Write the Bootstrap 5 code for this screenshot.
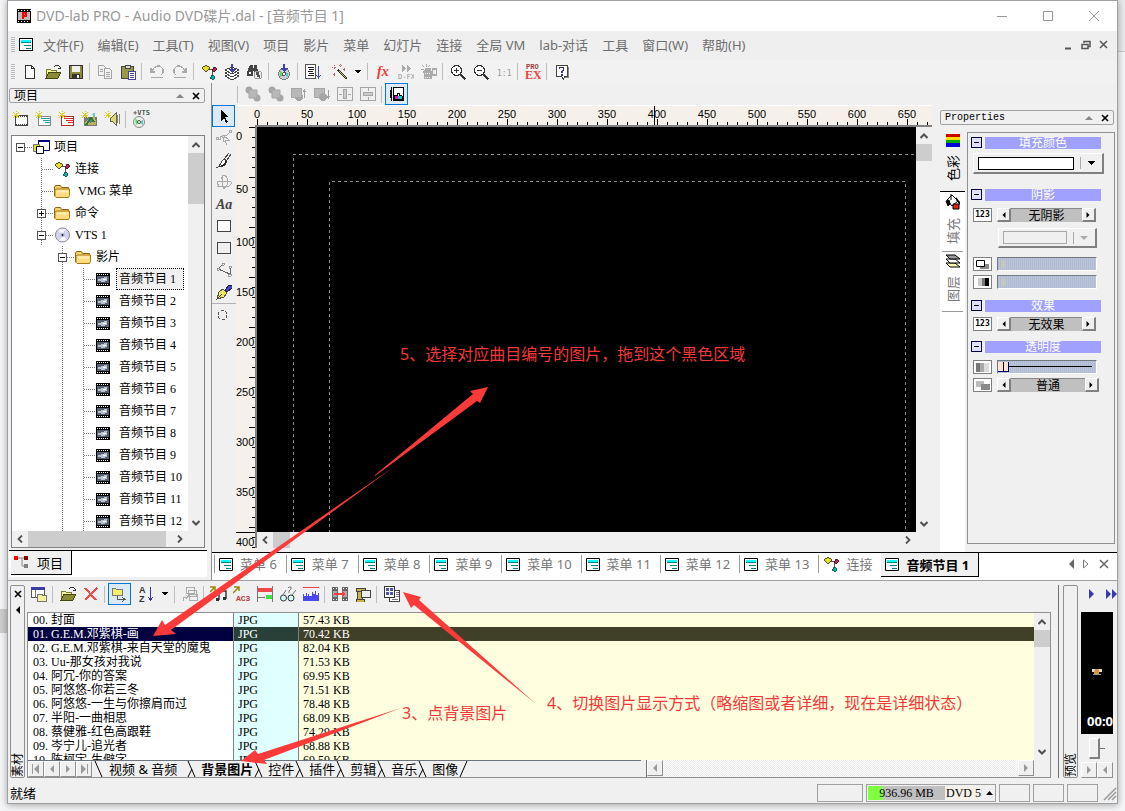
<!DOCTYPE html>
<html lang="zh-CN">
<head>
<meta charset="utf-8">
<meta name="viewport" content="width=device-width, initial-scale=1">
<title>DVD-lab PRO</title>
<link rel="stylesheet" href="https://cdn.jsdelivr.net/npm/bootstrap@5.3.0/dist/css/bootstrap.min.css">
<style>
:root{--face:#f0f0f0;--edge:#a0a0a0;--ui:"Noto Sans","Noto Sans CJK SC",sans-serif;--sim:"Liberation Serif","Noto Sans CJK SC",serif}
body{background:linear-gradient(#cdcdcd,#cdcdcd) 0 609px/8px 24px no-repeat,linear-gradient(#c8cacc,#c8cacc) 100% 51px/8px 1px no-repeat,linear-gradient(#e9eaec,#e9eaec) 100% 0/8px 51px no-repeat,#f5f6f7;font:13px/14px var(--ui);color:#000;height:100vh;overflow:hidden;padding:0 7px 7px 7px;position:relative}
button,input{font:inherit;color:inherit;padding:0;border:0;background:none}
a{color:inherit;text-decoration:none}
svg{display:block;flex:none}
.i{width:16px;height:16px;shape-rendering:crispEdges}
.app{background:var(--face);border:1px solid var(--edge);box-shadow:0 1px 7px rgba(0,0,0,.35);height:100%}
.titlebar{height:30px;background:#fff;color:#999;font-size:14px;flex:none}
.titlebar .ctl{width:46px}
.menubar{height:29px;color:#6d6d6d;background:#efefef;flex:none;padding:0 4px 2px 3px}
.grip{width:4px;height:16px;background:repeating-linear-gradient(#b8b8b8 0 1px,transparent 1px 2px)}
.bar23{height:23px;background:#f2f2f2;flex:none}
.tb{width:23px;height:22px;display:flex;align-items:center;justify-content:center;flex:none}
.tb.active{background:#dceaf6;border:1px solid #0078d7}
.dd{width:14px;height:22px;display:flex;align-items:center;justify-content:center;flex:none}
.sep{width:6px;height:17px;flex:none;background:linear-gradient(90deg,transparent 2px,#bdbdbd 2px 3px,transparent 3px)}
.cap{height:15px;border:1px solid var(--edge);border-radius:2px;font:12px/12px var(--sim);flex:none}
.leftdock{width:203px;flex:none}
.leftdock .cap{margin:5px 6px 0 1px}
.treebox{border:1px solid #808080;margin:0 6px 2px 3px}
.tree{font:12px/22px var(--sim);background:#fff}
.trow{height:22px;white-space:nowrap}
.g{width:21px;height:22px;flex:none;background-repeat:no-repeat}
.gv{background-image:repeating-linear-gradient(#777 0 1px,transparent 1px 2px);background-size:1px 22px;background-position:8px 0}
.gt{background-image:repeating-linear-gradient(#777 0 1px,transparent 1px 2px),repeating-linear-gradient(90deg,#777 0 1px,transparent 1px 2px);background-size:1px 22px,12px 1px;background-position:8px 0,9px 11px}
.gh{background-image:repeating-linear-gradient(90deg,#777 0 1px,transparent 1px 2px);background-size:12px 1px;background-position:9px 11px}
.box9{width:9px;height:9px;border:1px solid #555;background:linear-gradient(#000,#000) center/5px 1px no-repeat,#fff;margin:7px 0 0 4px;display:block}
.box9.plus{background:linear-gradient(#000,#000) center/5px 1px no-repeat,linear-gradient(#000,#000) center/1px 5px no-repeat,#fff}
.tico{width:21px;flex:none}
.tname{margin-left:2px}
.focus1{outline:1px dotted #000;outline-offset:-1px;background:#f0f0f0;padding-left:3px;margin-left:-1px;height:22px;width:68px}
.sbv{width:16px;flex:none;background:var(--face)}
.sbh{height:16px;flex:none;background:var(--face)}
.sbv button,.sbh button{width:16px;height:17px;display:flex;align-items:center;justify-content:center}
.sbh button{height:16px}
.thumb{background:#cdcdcd}
.ltabs{height:27px;background:#fff;border-top:1px solid #000;margin:0 4px 3px 1px;flex:none}
.ltab{background:var(--face);border:solid #000;border-width:0 1px 1px 0;height:24px;padding:0 8px 0 3px;margin-left:2px;gap:7px}
.rightcol{border-left:1px solid #909090;min-width:0}
.palette{width:24px;flex:none}
.hruler{height:20px;flex:none;background:#f5f1ea;font:11px/12px "Liberation Sans",sans-serif;overflow:hidden;border-top:1px solid #fff;position:relative;
background-image:repeating-linear-gradient(90deg,#000 0 1px,transparent 1px 50px),repeating-linear-gradient(90deg,#000 0 1px,transparent 1px 10px);background-size:100% 6px,100% 3px;background-position:21px 100%;background-repeat:no-repeat}
.hruler span{width:50px;flex:none;text-align:center;padding-top:2px}
.hruler span:first-child{width:46px;padding-right:4px}
.hmark{position:absolute;left:418px;top:0;width:1px;height:19px;background:#000}
.vruler{width:19px;flex:none;background:#f5f1ea;font:11px/22px "Liberation Sans",sans-serif;overflow:hidden;position:relative;
background-image:repeating-linear-gradient(#000 0 1px,transparent 1px 50px),repeating-linear-gradient(#000 0 1px,transparent 1px 10px);background-size:6px 100%,3px 100%;background-position:100% 2px;background-repeat:no-repeat}
.vruler span{display:block;height:50px}
.vruler span.wide{height:53px}
.vmark{position:absolute;left:0;right:0;bottom:19px;height:1px;background:#000}
.frame{border:solid #808080;border-width:2px 0 0 2px;min-width:0}
.stage{background:#000;min-width:0}
.dock{width:185px;flex:none}
.dock .cap{margin:5px 3px 0 0}
.side{width:25px;background:#fff;flex:none;color:#777}
.side a{display:flex;flex-direction:column;align-items:center;gap:8px;height:60px;border-bottom:1px solid #999;padding-top:2px;margin:0 2px}
.side a.on{background:var(--face);border-bottom:1px solid #000;color:#000;height:63px;margin:0;padding-top:5px}
.rot{writing-mode:vertical-rl;text-orientation:sideways;transform:rotate(180deg)}
.props{border:1px solid #909090;margin:3px 2px 8px 2px;padding:4px 13px 0 3px;font:12px/14px var(--sim);min-width:0}
.sec{gap:3px;height:12px}
.sec .bx{width:11px;height:11px;border:1px solid #000040;background:linear-gradient(#000,#000) center/5px 1px no-repeat,#e0e0ff}
.sec h6{background:#a0a0ff;color:#fff;font:12px/12px var(--sim);margin:0;text-align:center;flex:1;overflow:hidden}
.raised{border:solid;border-width:1px 2px 2px 1px;border-color:#fff #808080 #808080 #fff;background:var(--face)}
.tag{width:19px;height:14px;border:1px solid #808080;background:#fff;font:bold 8px/12px "DejaVu Sans Mono",monospace;display:flex;align-items:center;justify-content:center;flex:none;margin-left:2px}
.prow{gap:5px;height:14px}
.spin{width:99px;height:14px;background:#c0c0c0;display:flex;justify-content:space-between;line-height:14px;border-top:1px solid #888;flex:none}
.spin button{width:14px;height:14px;display:flex;align-items:center;justify-content:center;margin-top:-1px}
.swatch{height:13px;border:1px solid #000;background:#fff;flex:1}
input[type=range]{appearance:none;width:100px;flex:none;height:14px;background:repeating-linear-gradient(90deg,#b0bbd3 0 1px,#bac5da 1px 2px);border:1px solid #808890;border-color:#707880 #fff #fff #707880;margin:0}
input[type=range]::-webkit-slider-thumb{appearance:none;width:4px;height:8px;background:#c6c6bc;border:0;border-radius:0;margin-left:3px}
input.full{background:linear-gradient(#000,#000) 8px 5px/86px 1px no-repeat,repeating-linear-gradient(90deg,#b0bbd3 0 1px,#bac5da 1px 2px)}
input.full::-webkit-slider-thumb{width:11px;height:10px;margin:0;background:linear-gradient(#000,#000) 5px 0/1px 9px no-repeat,#ffe4d4;border:solid #000060;border-width:0 1px 1px 0}
.mdi{height:28px;background:#fff;border-top:1px solid #000;color:#777;padding-left:2px}
.mdi a{display:flex;align-items:center;gap:7px;height:22px;padding-right:9px;white-space:nowrap}
.mdi a::before{content:"";width:1px;height:18px;background:#999;margin-right:-3px}
.mdi a.on{background:var(--face);color:#000;font-weight:700;border:solid #000;border-width:0 1px 1px 0;padding:0 9px 0 4px;height:24px}
.mdi a.on::before{display:none}
.bottom{height:202px;flex:none;border-top:1px solid var(--edge)}
.strip{width:15px;flex:none;border:1px solid #909090;border-radius:2px;font:12px/13px var(--ui)}
.lbox{border:1px solid #909090}
.files{font:12px/14px var(--sim);table-layout:fixed;width:100%;border-collapse:separate;border-spacing:0}
.files td{padding:0 0 0 4px;height:14px;white-space:nowrap;overflow:hidden}
.files td:nth-child(1){background:#fff;width:206px;border-right:1px solid #808080;padding-left:5px}
.files td:nth-child(2){background:#e0ffff;width:65px;border-right:1px solid #808080}
.files td:nth-child(3){background:#ffffe0}
.files b{font-weight:400;display:inline-block;width:18px}
.files tr.sel td{color:#fff}
.files tr.sel td:nth-child(1){background:#000040}
.files tr.sel td:nth-child(2){background:#284038}
.files tr.sel td:nth-child(3){background:#404028}
.nb{width:16px;height:16px;flex:none;border:solid;border-width:1px;border-color:#fff #909090 #909090 #fff;display:flex;align-items:center;justify-content:center}
.btab{height:17px;padding-left:15px;position:relative;line-height:16px;white-space:nowrap}
.btab:first-child{padding-right:9px}
.btab svg{position:absolute;left:-4px;top:0}
.btab.on{font-weight:700}
.hatch{background:repeating-conic-gradient(#fff 0 25%,#ebebeb 0 50%) 0 0/2px 2px}
.status{height:21px;flex:none;gap:3px}
.pane{height:18px;border:1px solid var(--edge);font:12px/14px var(--sim)}
.progress{height:14px;width:79px;background:#c0c0c0;position:relative;border-radius:0}
.progress-bar{background:#80ff40}
.progress .amount{position:absolute;inset:0;text-align:center;color:#000;font:12px/14px var(--sim)}
.ink{position:absolute;left:0;top:0;pointer-events:none}
.note{position:absolute;color:#f43838;font:16px/20px var(--ui);white-space:nowrap;pointer-events:none}
</style>
</head>
<body>
<svg width="0" height="0" class="position-absolute">
<defs>
<symbol id="film" viewBox="0 0 16 16"><path d="M1 1h14v14H1z"/><path d="M2 4h12v8H2z" fill="#bbb"/><path d="M2 2h1v1H2zm3 0h1v1H5zm3 0h1v1H8zm3 0h1v1h-1zm3 0h1v1h-1zM2 13h1v1H2zm3 0h1v1H5zm3 0h1v1H8zm3 0h1v1h-1z" fill="#fff"/><path d="M6 5h4v3H7v3M7 5v4" fill="none" stroke="#f00" stroke-width="1.4"/></symbol>
<symbol id="mv" viewBox="0 0 14 13"><path d="M0 0h14v13H0z"/><path d="M1 3h12v7H1z" fill="#556070"/><path d="M1 1h1v1H1zm2 0h1v1H3zm2 0h1v1H5zm2 0h1v1H7zm2 0h1v1H9zm2 0h1v1h-1zM1 11h1v1H1zm2 0h1v1H3zm2 0h1v1H5zm2 0h1v1H7zm2 0h1v1H9zm2 0h1v1h-1z" fill="#fff"/><path d="M2 6h3V5h3V4h3v4H9v1H5V8H2z" fill="#b9c4cf"/><path d="M7 6h3v1H7z" fill="#fff"/></symbol>
<symbol id="menu" viewBox="0 0 14 13"><path d="M.5.5h13v12H.5z" fill="#fff" stroke="#000"/><path d="M2 2h10v2H2z" fill="#0ff"/><path d="M2 4h10v1H2zM5 7h7v1H5zm2 3h5v1H7z" fill="#008080"/></symbol>
<symbol id="new" viewBox="0 0 16 16"><path d="M3.500 1.500h6l3 3v10h-9zM9.500 1.500v3h3" fill="#fff" stroke="#333"/></symbol>
<symbol id="open" viewBox="0 0 16 16"><path d="M1 14V5h4l1 1h5v3" fill="#f2f29a" stroke="#7c7c30"/><path d="M1 14l3-6h12l-3 6z" fill="#8c8c38" stroke="#444410"/><path d="M9 3l2-2h2l2 2v2m-2-1h3" fill="none" stroke="#333"/></symbol>
<symbol id="save" viewBox="0 0 16 16"><path d="M1.500 1.500h13v13h-13z" fill="#8c8c38" stroke="#333"/><path d="M4 2h8v6H4z" fill="#f0f0f0"/><path d="M4 10h8v4H4z" fill="#333"/><path d="M9 11h2v3H9z" fill="#eee"/></symbol>
<symbol id="copy" viewBox="0 0 16 16"><g fill="#f2f2f2" stroke="#a4a4a4"><path d="M1.500 1.500h5l2 2v8h-7z"/><path d="M7.500 4.500h5l2 2v8h-7z"/><path d="M3 5.500h3M3 7.500h3M9 8.500h4M9 10.500h4M9 12.500h4"/></g></symbol>
<symbol id="paste" viewBox="0 0 16 16"><path d="M1.500 2.500h12v12h-12z" fill="#99994a" stroke="#444"/><path d="M5 1h5v3H5z" fill="#ddd" stroke="#444"/><path d="M8.500 7.500h7v8h-7z" fill="#fff" stroke="#44a"/><path d="M10 9.500h4M10 11.500h4M10 13.500h4" stroke="#44a"/></symbol>
<symbol id="undo" viewBox="0 0 16 16"><path d="M2 4v4h4M2 8l3-4 3-2h3l3 3v4l-2 2M2 13.500h12" fill="none" stroke="#aaa" stroke-width="1.200"/></symbol>
<symbol id="redo" viewBox="0 0 16 16"><path d="M14 4v4h-4M14 8l-3-4-3-2H5L2 5v4l2 2M2 13.500h12" fill="none" stroke="#aaa" stroke-width="1.200"/></symbol>
<symbol id="link" viewBox="0 0 16 16"><path d="M8 5h3v7M11 5v2" fill="none" stroke="#555"/><path d="M5 1l4 3-4 4-4-4z" fill="#e8e020" stroke="#222200" stroke-width=".8"/><path d="M13 3l3 2-3 3-2-2z" fill="#c02070" stroke="#400" stroke-width=".8"/><path d="M11 11l3 2-2 3-3-2z" fill="#10b0b0" stroke="#044" stroke-width=".8"/></symbol>
<symbol id="stack" viewBox="0 0 16 16"><g fill="#fff" stroke="#444"><path d="M1 12l7-3 7 3-7 4z"/><path d="M1 9l7-3 7 3-7 4z"/><path d="M1 6l7-3 7 3-7 4z"/></g><path d="M7 0h2v5h3L8 9 4 5h3z" fill="#4040b0"/></symbol>
<symbol id="bino" viewBox="0 0 16 16"><path d="M3 1h3v3h1V1h3v3l2 4v3H7V7H6v5H0V8z" fill="#444"/><path d="M2 8h2v2H2z" fill="#fff"/><circle cx="11" cy="11" r="4" fill="#eee" stroke="#999"/><path d="M9 8h3l1 6-3-1z" fill="#555"/></symbol>
<symbol id="burn" viewBox="0 0 16 16"><circle cx="8" cy="10" r="5.500" fill="#ccd" stroke="#777"/><path d="M4 7l4 3-4 3z" fill="#5d5"/><path d="M12 13l-4-3 4-1z" fill="#4cc"/><circle cx="8" cy="10" r="1.500" fill="#fff" stroke="#555"/><path d="M7 0h2v4h3L8 8 4 4h3z" fill="#4040b0"/></symbol>
<symbol id="sort" viewBox="0 0 16 16"><path d="M.5.5h10v14H.5z" fill="#fff" stroke="#555"/><path d="M3 3.500h6M4 5.500h5M3 7.500h5M4 9.500h5M3 11.500h6" stroke="#222"/><path d="M13.500 2v11M11.500 11l2 3 2-3" fill="none" stroke="#44a"/></symbol>
<symbol id="wand" viewBox="0 0 16 16"><path d="M6 6l9 9" stroke="#333" stroke-width="2.200"/><path d="M7 7l7 7" stroke="#ccb060"/><path d="M2 1v4M0 3h4M8 0v3M7 1.500h3M2 9v3M.5 10.500h3M12 4v3M10.500 5.500h3" stroke="#b06a6a" stroke-dasharray="1 .5"/></symbol>
<symbol id="tri" viewBox="0 0 8 8"><path d="M1 2h6v1H1zM2 3h4v1H2zM3 4h2v1H3z"/></symbol>
<symbol id="fx" viewBox="0 0 16 16"><text x="2" y="12" font-family="Liberation Serif" font-size="14" font-style="italic" font-weight="700" fill="#f03a3a">fx</text></symbol>
<symbol id="dfx" viewBox="0 0 16 16"><path d="M4 1l4 3.500L4 8zM9 1l4 3.500L9 8z" fill="#aaa"/><text x="0" y="15" font-family="DejaVu Sans Mono" font-size="7" fill="#999">D-FX</text></symbol>
<symbol id="camd" viewBox="0 0 16 16"><path d="M1 1l2 2m2-3v3m4-2L7 3M0 5h3m1 1l-2 3" stroke="#aaa"/><path d="M3 7h8v8H3zM11 4h5v8h-5zM4 4h6v3H4z" fill="#aaa"/><path d="M4 9h6M4 13h6" stroke="#f2f2f2" stroke-dasharray="1 1"/><path d="M12 6h3v4h-3z" fill="#eee"/></symbol>
<symbol id="zin" viewBox="0 0 16 16"><circle cx="6.500" cy="6.500" r="5" fill="#fff" stroke="#333"/><path d="M4 6.500h5M6.500 4v5" stroke="#333"/><path d="M10.500 10.500l5 5" stroke="#333" stroke-width="2"/></symbol>
<symbol id="zout" viewBox="0 0 16 16"><circle cx="6.500" cy="6.500" r="5" fill="#fff" stroke="#333"/><path d="M4 6.500h5" stroke="#333"/><path d="M10.500 10.500l5 5" stroke="#333" stroke-width="2"/></symbol>
<symbol id="one" viewBox="0 0 16 16"><text x="1" y="12" font-family="DejaVu Sans Mono" font-size="8" fill="#999">1:1</text></symbol>
<symbol id="pro" viewBox="0 0 16 16"><text x="1" y="5" font-family="Liberation Mono" font-size="7" font-weight="700" fill="#a04040">PRO</text><text x="0" y="15" font-family="Liberation Serif" font-size="12" font-weight="700" fill="#f04040">EX</text></symbol>
<symbol id="help" viewBox="0 0 16 16"><path d="M2.500 1.500h11v11h-3l-1 3-2-3h-5z" fill="#fff" stroke="#444"/><path d="M14 3v10h-3" fill="none" stroke="#888"/><path d="M5.500 5V3.500h4V6L8 7.500V9M8 10v1.500" fill="none" stroke="#3030a0" stroke-width="1.600"/></symbol>
<symbol id="grpA" viewBox="0 0 16 16"><g shape-rendering="auto"><circle cx="4" cy="4" r="3.500" fill="#a6a6a6"/><circle cx="12" cy="12" r="3.500" fill="#a6a6a6"/><path d="M4 4h8v8H4z" fill="#b8b8b8" stroke="#a6a6a6"/></g></symbol>
<symbol id="grpU" viewBox="0 0 16 16"><circle cx="8" cy="11" r="4" fill="#a6a6a6"/><path d="M.5 2.500h10v9H.5z" fill="#b8b8b8" stroke="#a6a6a6"/><path d="M13.500 12V4M12 6l1.500-2L15 6" stroke="#a0a0a0" fill="none"/></symbol>
<symbol id="grpD" viewBox="0 0 16 16"><path d="M.5 2.500h10v9H.5z" fill="#b8b8b8" stroke="#a6a6a6"/><circle cx="9" cy="11" r="4" fill="#a6a6a6"/><path d="M14.500 4v8M13 10l1.500 2 1.500-2" stroke="#a0a0a0" fill="none"/></symbol>
<symbol id="ch" viewBox="0 0 16 16"><path d="M.5 1.500h15v13H.5z" fill="none" stroke="#a6a6a6"/><path d="M6.500 3.500h3v9h-3zM2 8.500h3M11 8.500h3" fill="#ccc" stroke="#a6a6a6"/></symbol>
<symbol id="cv" viewBox="0 0 16 16"><path d="M.5 1.500h15v13H.5z" fill="none" stroke="#a6a6a6"/><path d="M3.500 6.500h9v3h-9zM8.500 2v3M8.500 11v3" fill="#ccc" stroke="#a6a6a6"/></symbol>
<symbol id="book" viewBox="0 0 16 16"><path d="M4 1h11v14H4z"/><path d="M5 2h9v12H5z" fill="#fff"/><path d="M2 1h1v14H2zM1 4h1v8H1z"/><path d="M6 10h3v3H6z" fill="#f0c"/><path d="M9 10h4v3H9z" fill="#0cc"/><path d="M8 7h3v1H8zM8 8h1v2H8zM10 8h1v2h-1zM5 9h3v1H5zM11 9h2v1h-2zM5 10h1v3H5zM13 10h1v3h-1zM5 13h9v1H5z"/></symbol>
<symbol id="cur" viewBox="0 0 16 16"><path d="M5 1l7 8H9l3 5-2 1-2-5-3 3z"/></symbol>
<symbol id="node" viewBox="0 0 16 16"><path d="M1 9h3V7l7-2 2-2M7 7l1 5 2-2h3L8 6" fill="none" stroke="#aaa"/><path d="M.5 7.500h2v2h-2zM13.500.5h2v2h-2zM6.500 5.500h2v2h-2zM9 11l2 4" fill="#eee" stroke="#aaa"/></symbol>
<symbol id="brush" viewBox="0 0 16 16"><path d="M13 1L8 7M15 2l-4 6" stroke="#444" fill="none"/><path d="M8 7l3 2c-1 4-4 6-9 6 3-2 3-6 6-8z" fill="#fff" stroke="#444"/><path d="M5 14c3 0 5-3 5-5" stroke="#222" stroke-width="1.500" fill="none"/></symbol>
<symbol id="rotn" viewBox="0 0 16 16"><path d="M7 1h2l2 3v7l-3 4-2-4V4zM2 7l12 0 2 2-3 3H3L1 9zM4 13l-3-1m5-9l-1 2" fill="none" stroke="#aaa"/></symbol>
<symbol id="aa" viewBox="0 0 18 16"><text x="1" y="13" font-family="Liberation Serif" font-size="14" font-style="italic" font-weight="700" fill="#444">Aa</text></symbol>
<symbol id="rw" viewBox="0 0 16 16"><path d="M1.500 2.500h13v11h-13z" fill="#fff" stroke="#444"/></symbol>
<symbol id="re" viewBox="0 0 16 16"><path d="M1.500 2.500h13v11h-13z" fill="none" stroke="#444"/></symbol>
<symbol id="poly" viewBox="0 0 16 16"><path d="M7 2L2 7l12 5V5" fill="none" stroke="#666"/><path d="M6 1h2v2H6zM1 6h2v2H1zM13 4h2v2h-2zM12 12h3v2h-3z" fill="#fff" stroke="#777" stroke-width=".7"/></symbol>
<symbol id="pen" viewBox="0 0 16 16"><path d="M9 6l4-5h3v3l-5 4z" fill="#4444d0" stroke="#223"/><path d="M1 15l2-7 4-3 4 4-3 4z" fill="#eee860" stroke="#554"/><path d="M1 15l5-5" stroke="#443"/></symbol>
<symbol id="circ" viewBox="0 0 16 16"><circle cx="6.500" cy="8" r="4.500" fill="none" stroke="#555" stroke-dasharray="3 1.700"/></symbol>
<symbol id="spark" viewBox="0 0 8 8"><path d="M4 0v8M0 4h8M1 1l6 6M7 1L1 7" stroke="#d8cc20" stroke-dasharray="1 .5"/></symbol>
<symbol id="nfilm" viewBox="0 0 16 16"><path d="M3.500 4.500h12v10h-12z" fill="#fff" stroke="#444"/><path d="M4 5.500h11M4 13.500h11" stroke="#444" stroke-dasharray="1 1"/><use href="#spark" width="8" height="8"/></symbol>
<symbol id="nmenu" viewBox="0 0 16 16"><path d="M3.500 5.500h12v9h-12z" fill="#fff" stroke="#888"/><path d="M6 7.500h9M8 9.500h7M10 11.500h5" stroke="#20a0a0"/><use href="#spark" width="8" height="8"/></symbol>
<symbol id="nred" viewBox="0 0 16 16"><path d="M3.500 5.500h12v9h-12z" fill="#fff" stroke="#b03030"/><path d="M6 7.500h9M8 9.500h7M10 11.500h5" stroke="#e03030"/><use href="#spark" width="8" height="8"/></symbol>
<symbol id="npic" viewBox="0 0 16 16"><path d="M3 6h13v9H3z" fill="#777"/><path d="M4 12l3-4 3 5 3-9 2 6v4H4z" fill="#c0b060"/><path d="M5 14l5-7 3 4" stroke="#208040" fill="none" stroke-width="2"/><path d="M10 3l4-1v4z" fill="#6cc"/><use href="#spark" width="8" height="8"/></symbol>
<symbol id="nsnd" viewBox="0 0 16 16"><path d="M6 6h2l4-4v12L8 10H6z" fill="#ddd680" stroke="#665"/><path d="M13.500 4v8M15.500 3v10" stroke="#887"/><use href="#spark" width="8" height="8"/></symbol>
<symbol id="vts" viewBox="0 0 18 18"><circle cx="7" cy="12" r="5.500" fill="#eee" stroke="#888"/><path d="M3 8l4 4-3 3z" fill="#5d5"/><path d="M11 15l-4-3 4-2z" fill="#5cc"/><circle cx="7" cy="12" r="1.500" fill="#fff" stroke="#555"/><text x="1" y="5" font-family="DejaVu Sans Mono" font-size="7" font-weight="700" fill="#555">+VTS</text></symbol>
<symbol id="proj" viewBox="0 0 17 16"><path d="M5.500 1.500h11v10h-11z" fill="#fff" stroke="#000080"/><path d="M5 1h12v2H5z" fill="#000080"/><path d="M.5 5.500h6v7h-6z" fill="#e8e020" stroke="#777"/><path d="M3.500 7.500h7v7h-7z" fill="#fff" stroke="#000"/></symbol>
<symbol id="fold" viewBox="0 0 17 15"><path d="M.5 12.500v-9l1-1.500h5l1 2h7v3" fill="#f4d070" stroke="#8a6410"/><path d="M1 13V7l1-1.500h13.500V12l-1 2H2z" fill="#ffdc80" stroke="#a87814"/><path d="M3 7h11v2H3z" fill="#fff0b8"/></symbol>
<symbol id="disc" viewBox="0 0 17 17"><g shape-rendering="auto"><circle cx="8.500" cy="8.500" r="7.500" fill="#d4d4ee" stroke="#888"/><path d="M4 3l4 5 4-6zM5 15l4-7 4 6z" fill="#f6f6ff"/><circle cx="8.500" cy="8.500" r="2.500" fill="#bbd"/><circle cx="8.500" cy="8.500" r="1" fill="#222"/></g></symbol>
<symbol id="ptab" viewBox="0 0 16 13"><path d="M4 2h4v8h4M8 2h4" fill="none" stroke="#888"/><path d="M0 0h4v4H0z" fill="#f00"/><path d="M10 0h4v4h-4z" fill="#800000"/><path d="M10 8h4v4h-4z" fill="#808080"/></symbol>
<symbol id="up" viewBox="0 0 8 8"><path d="M.5 6L4 2.500 7.500 6" fill="none" stroke="#505050" stroke-width="2"/></symbol>
<symbol id="dn" viewBox="0 0 8 8"><path d="M.5 2L4 5.500 7.500 2" fill="none" stroke="#505050" stroke-width="2"/></symbol>
<symbol id="lt" viewBox="0 0 8 8"><path d="M6 .5L2.500 4 6 7.500" fill="none" stroke="#505050" stroke-width="1.800"/></symbol>
<symbol id="rt" viewBox="0 0 8 8"><path d="M2 .5L5.500 4 2 7.500" fill="none" stroke="#505050" stroke-width="1.800"/></symbol>
<symbol id="tl" viewBox="0 0 8 8"><path d="M6 0v8L2 4z"/></symbol>
<symbol id="tr" viewBox="0 0 8 8"><path d="M2 0v8l4-4z"/></symbol>
<symbol id="x" viewBox="0 0 8 8"><path d="M1 1l6 6M7 1L1 7" stroke="currentColor" stroke-width="1.700"/></symbol>
<symbol id="fwin" viewBox="0 0 16 16"><path d="M.5 1.500h13v10H.5z" fill="#fff" stroke="#555"/><path d="M0 1h14v3H0z" fill="#3c3ca8"/><path d="M4.500 4v8" stroke="#777"/><path d="M6.500 15V8h4l1 1h4v6z" fill="#f4f0a0" stroke="#777"/></symbol>
<symbol id="del" viewBox="0 0 16 16"><path d="M2 2l11 12M14 2L2 14" stroke="#f04848" stroke-width="2"/></symbol>
<symbol id="ftree" viewBox="0 0 16 16"><path d="M.5 9.500v-7h3l1 1h6v6z" fill="#f4f070" stroke="#777"/><path d="M5 10v3.500h8M10 11l3 2.500-3 2" fill="none" stroke="#555"/></symbol>
<symbol id="az" viewBox="0 0 16 16"><text x="0" y="7" font-family="Liberation Sans" font-size="9" font-weight="700" fill="#333">A</text><text x="0" y="16" font-family="Liberation Sans" font-size="9" font-weight="700" fill="#333">Z</text><path d="M11.500 1v12M9 11l2.500 3 2.500-3" fill="none" stroke="#3838a8"/></symbol>
<symbol id="casc" viewBox="0 0 16 16"><path d="M4.500 1.500h8v6h-8zM6.500 4.500h8v6h-8zM7.500 8.500h8v6h-8z" fill="#f2f2f2" stroke="#aaa"/><path d="M1 15v-4h5M4 9l2 2-2 2" stroke="#aaa" fill="none"/></symbol>
<symbol id="note" viewBox="0 0 18 16"><path d="M0 1h5v4M5 1L0 6" stroke="#998800" fill="none" stroke-width="1.500"/><path d="M9 14V5h7v8" fill="none" stroke="#333" stroke-width="1.400"/><path d="M6 12h3v3H6zM13 11h3v3h-3z" fill="#333"/></symbol>
<symbol id="ac3" viewBox="0 0 18 16"><path d="M1 1h5v4M6 1L0 7" stroke="#998800" fill="none" stroke-width="1.500"/><text x="3" y="15" font-family="Liberation Mono" font-size="8" font-weight="700" fill="#b04040">AC3</text></symbol>
<symbol id="rg" viewBox="0 0 16 16"><path d="M1 2h14v4H1z" fill="#f04848"/><path d="M9 9h6v4H9z" fill="#40e040"/><path d="M.5 0v16M15.500 0v16M1 11.500h7" stroke="#777"/></symbol>
<symbol id="glas" viewBox="0 0 16 16"><g shape-rendering="auto"><circle cx="3.500" cy="12" r="3" fill="#cff" stroke="#333"/><circle cx="11" cy="12" r="3" fill="#cff" stroke="#333"/><path d="M3 9l3-5M12 9l4-5M8 2l1-1h2v2L9 5v2" fill="none" stroke="#777"/></g></symbol>
<symbol id="hist" viewBox="0 0 16 16"><path d="M0 1.500h16" stroke="#f04040"/><path d="M0 15V8h1v2h2V7h1v3h1V8h1v2h3V6h1v2h2V5h1v4h2V7h1v8z" fill="#4848f0"/></symbol>
<symbol id="fcut" viewBox="0 0 16 16"><path d="M0 1h6v14H0zM10 1h6v14h-6z" fill="#666"/><path d="M1 2h1v1H1zm3 0h1v1H4zm7 0h1v1h-1zm3 0h1v1h-1zM1 13h1v1H1zm3 0h1v1H4zm7 0h1v1h-1zm3 0h1v1h-1z" fill="#fff"/><path d="M1 5h4v6H1zM11 5h4v6h-4z" fill="#aaa"/><path d="M2 7h8V5l4 3-4 3V9H2z" fill="#f04040"/></symbol>
<symbol id="fdev" viewBox="0 0 16 16"><path d="M1 2h9v3H1zM2 5h5v8H2zM1 13h8v3H1z" fill="#c8b840" stroke="#444"/><path d="M6.500 4.500h9v7h-9z" fill="#eee" stroke="#444"/></symbol>
<symbol id="thumbs" viewBox="0 0 16 16"><path d="M5.500 4.500h10v11h-10z" fill="#fff" stroke="#444"/><path d="M.5.5h10v11H.5z" fill="#fff" stroke="#333"/><path d="M2 2h3v3H2zm4 0h3v3H6zM2 6h3v3H2zm4 0h3v3H6z" fill="#5050b0"/><path d="M12 6.500h3M12 8.500h3M12 10.500h3M8 13.500h6" stroke="#777"/></symbol>
<symbol id="rain" viewBox="0 0 14 13"><path d="M0 0h14v13H0z" fill="#c00"/><path d="M0 3h14v4H0z" fill="#fd0"/><path d="M0 6h14v3H0z" fill="#0a0"/><path d="M0 9h14v4H0z" fill="#00d"/></symbol>
<symbol id="buck" viewBox="0 0 16 16"><path d="M2 6l5-5 6 6-6 5z" fill="#fff" stroke="#000"/><path d="M1 7l3-1 1 4-2 2zM6 0v6" fill="#000" stroke="#000"/><path d="M8 10h6v5H8z" fill="#e02020" stroke="#000"/><path d="M11 3l4 5v3l-4-5z"/></symbol>
<symbol id="lay" viewBox="0 0 16 14"><g stroke="#000"><path d="M1 9h9l5 4H5z" fill="#ffa"/><path d="M1 5h9l5 4H5z" fill="#fff"/><path d="M1 1h9l5 4H5z" fill="#999"/></g></symbol>
</defs>
</svg>

<div class="app d-flex flex-column">
  <header class="titlebar d-flex align-items-center">
    <svg class="i ms-2 me-1"><use href="#film"/></svg>
    <span>DVD-lab PRO - Audio DVD碟片.dal - [音频节目 1]</span>
    <span class="ms-auto d-flex">
      <button class="ctl" aria-label="最小化"><svg class="m-auto" width="10" height="10"><path d="M0 5.500h10" stroke="#999"/></svg></button>
      <button class="ctl" aria-label="最大化"><svg class="m-auto" width="10" height="10"><path d="M.5.5h9v9h-9z" fill="none" stroke="#999"/></svg></button>
      <button class="ctl" aria-label="关闭"><svg class="m-auto" width="10" height="10"><path d="M0 0l10 10M10 0L0 10" stroke="#999"/></svg></button>
    </span>
  </header>

  <nav class="menubar d-flex align-items-center">
    <i class="grip"></i>
    <svg width="14" height="13" class="ms-1" shape-rendering="crispEdges"><use href="#menu"/></svg>
    <div class="d-flex ms-2" id="menus" style="gap:14px;padding-left:2px"></div>
    <span class="ms-auto d-flex align-items-center gap-2 pe-1">
      <button aria-label="最小化"><svg width="10" height="10"><path d="M2 8.500h6" stroke="#555" stroke-width="2"/></svg></button>
      <button aria-label="还原"><svg width="10" height="10"><path d="M3 3V1.500h6v5H7" fill="none" stroke="#555" stroke-width="1.500"/><path d="M1 4.500h6v4H1z" fill="none" stroke="#555" stroke-width="1.500"/></svg></button>
      <button aria-label="关闭"><svg width="10" height="10"><path d="M1 1l7 7M8 1L1 8" stroke="#555" stroke-width="1.500"/></svg></button>
    </span>
  </nav>

  <div class="bar23 d-flex align-items-center" id="bar1" style="padding-left:3px"><i class="grip" style="margin-right:3px"></i></div>

  <main class="d-flex flex-fill" style="min-height:0">
    <section class="leftdock d-flex flex-column">
      <div class="cap d-flex align-items-center ps-1 pe-1"><span>项目</span>
        <svg class="ms-auto me-2" width="8" height="8"><path d="M0 6h8L4 2z" fill="#888"/></svg>
        <button aria-label="关闭"><svg width="8" height="8"><use href="#x"/></svg></button></div>
      <div class="d-flex align-items-center flex-shrink-0" id="bar3" style="height:32px"></div>
      <div class="treebox d-flex flex-column flex-fill" style="min-height:0">
        <div class="d-flex flex-fill" style="min-height:0">
          <div class="tree flex-fill overflow-hidden" id="tree"></div>
          <div class="sbv d-flex flex-column"><button aria-label="上"><svg width="8" height="8"><use href="#up"/></svg></button><div class="thumb" style="height:51px"></div><button class="mt-auto" aria-label="下"><svg width="8" height="8"><use href="#dn"/></svg></button></div>
        </div>
        <div class="sbh d-flex pe-3"><button aria-label="左"><svg width="8" height="8"><use href="#lt"/></svg></button><div class="thumb" style="width:138px"></div><button class="ms-auto" aria-label="右"><svg width="8" height="8"><use href="#rt"/></svg></button></div>
      </div>
      <div class="ltabs d-flex"><a href="#" class="ltab d-flex align-items-center"><svg width="16" height="13"><use href="#ptab"/></svg><span>项目</span></a></div>
    </section>

    <section class="rightcol flex-fill d-flex flex-column">
      <div class="d-flex align-items-center flex-shrink-0" id="bar2" style="height:22px;padding-left:23px"></div>
      <div class="d-flex flex-fill" style="min-height:0">
        <div class="palette d-flex flex-column" id="palette"></div>
        <div class="flex-fill d-flex flex-column" style="min-width:0">
          <div class="hruler d-flex" id="hr"></div>
          <div class="d-flex flex-fill" style="min-height:0">
            <div class="vruler" id="vr"></div>
            <div class="frame flex-fill d-flex flex-column mb-1">
              <div class="d-flex flex-fill" style="min-height:0">
                <div class="stage flex-fill overflow-hidden"><svg width="100%" height="100%" shape-rendering="crispEdges"><g fill="none" stroke="#8c8c8c" stroke-dasharray="3 3"><path d="M36.500 700V27.500H900"/><path d="M72.500 700V54.500H648.500V700"/></g></svg></div>
                <div class="sbv d-flex flex-column"><button aria-label="上"><svg width="8" height="8"><use href="#up"/></svg></button><div class="thumb" style="height:17px"></div><button class="mt-auto" aria-label="下"><svg width="8" height="8"><use href="#dn"/></svg></button></div>
              </div>
              <div class="sbh d-flex pe-3"><button aria-label="左"><svg width="8" height="8"><use href="#lt"/></svg></button><div class="thumb" style="width:17px"></div><button class="ms-auto" aria-label="右"><svg width="8" height="8"><use href="#rt"/></svg></button></div>
            </div>
          </div>
        </div>
        <aside class="dock d-flex flex-column ps-2">
          <div class="cap d-flex align-items-center ps-1 pe-1" style="font:10px/12px 'Liberation Mono',monospace"><span>Properties</span>
            <svg class="ms-auto me-2" width="8" height="8"><path d="M0 6h8L4 2z" fill="#888"/></svg>
            <button aria-label="关闭"><svg width="8" height="8"><use href="#x"/></svg></button></div>
          <div class="d-flex flex-fill pt-1">
            <nav class="side">
              <a href="#" class="on"><svg width="14" height="13"><use href="#rain"/></svg><span class="rot">色彩</span></a>
              <a href="#"><svg width="16" height="16"><use href="#buck"/></svg><span class="rot">填充</span></a>
              <a href="#"><svg width="16" height="14"><use href="#lay"/></svg><span class="rot">图层</span></a>
            </nav>
            <div class="props flex-fill">
              <div class="sec d-flex"><button class="bx" aria-label="折叠"></button><h6>填充颜色</h6></div>
              <button class="raised d-flex align-items-center px-1 mt-1" style="width:131px;height:21px;margin-left:2px" aria-label="填充颜色"><span class="swatch"></span><svg class="ms-1" width="20" height="12" shape-rendering="crispEdges"><path d="M2.500 0v12" stroke="#aaa"/><path d="M9 4h8l-4 4z"/></svg></button>
              <div class="sec d-flex" style="margin-top:15px"><button class="bx" aria-label="折叠"></button><h6>阴影</h6></div>
              <div class="prow d-flex" style="margin-top:7px"><span class="tag">123</span><div class="spin"><button class="raised" aria-label="上一个"><svg width="6" height="6"><use href="#tl"/></svg></button><span>无阴影</span><button class="raised" aria-label="下一个"><svg width="6" height="6"><use href="#tr"/></svg></button></div></div>
              <button class="raised d-flex align-items-center px-1" style="width:99px;height:20px;margin:6px 0 0 27px" aria-label="阴影颜色" disabled><span class="swatch" style="border-color:#aaa;background:#f0f0f0"></span><svg class="ms-1" width="20" height="12"><path d="M2.500 0v12" stroke="#aaa"/><path d="M9 4h8l-4 4z" fill="#aaa"/></svg></button>
              <div class="prow d-flex" style="margin-top:9px"><span class="tag"><svg width="15" height="11"><path d="M5 5h9v5H5z" fill="#888"/><path d="M1.500 1.500h8v6h-8z" fill="#fff" stroke="#000"/></svg></span><input type="range" value="0" aria-label="阴影距离" disabled></div>
              <div class="prow d-flex" style="margin-top:4px"><span class="tag"><svg width="15" height="10"><path d="M3 1h4v8H3z" fill="#ccc"/><path d="M7 1h3v8H7z" fill="#777"/><path d="M10 1h4v8h-4z"/></svg></span><input type="range" value="0" aria-label="阴影柔化" disabled></div>
              <div class="sec d-flex" style="margin-top:11px"><button class="bx" aria-label="折叠"></button><h6>效果</h6></div>
              <div class="prow d-flex" style="margin-top:5px"><span class="tag">123</span><div class="spin"><button class="raised" aria-label="上一个"><svg width="6" height="6"><use href="#tl"/></svg></button><span>无效果</span><button class="raised" aria-label="下一个"><svg width="6" height="6"><use href="#tr"/></svg></button></div></div>
              <div class="sec d-flex" style="margin-top:10px"><button class="bx" aria-label="折叠"></button><h6>透明度</h6></div>
              <div class="prow d-flex" style="margin-top:7px"><span class="tag"><svg width="15" height="9"><path d="M1 0h4v9H1z" fill="#777"/><path d="M5 0h4v9H5z" fill="#aaa"/><path d="M9 0h5v9H9z" fill="#ddd"/></svg></span><input type="range" class="full" value="0" aria-label="透明度"></div>
              <div class="prow d-flex" style="margin-top:4px"><span class="tag"><svg width="16" height="11"><path d="M1 1h8v6H1z" fill="#bbb"/><path d="M6 4h9v6H6z" fill="#888"/></svg></span><div class="spin" style="width:102px"><button class="raised" aria-label="上一个"><svg width="6" height="6"><use href="#tl"/></svg></button><span>普通</span><button class="raised" aria-label="下一个"><svg width="6" height="6"><use href="#tr"/></svg></button></div></div>
            </div>
          </div>
        </aside>
      </div>
      <nav class="mdi d-flex flex-shrink-0" id="mdi"></nav>
    </section>
  </main>

  <section class="bottom d-flex">
    <div class="strip d-flex flex-column align-items-center my-1 pt-1" style="margin-left:2px;margin-right:2px">
      <button aria-label="关闭"><svg width="8" height="8"><use href="#x"/></svg></button>
      <svg class="mt-2" width="8" height="8"><use href="#tl"/></svg>
      <span class="rot mt-auto">素材</span>
    </div>
    <div class="flex-fill d-flex flex-column pb-1" style="min-width:0">
      <div class="d-flex align-items-center flex-shrink-0" id="bar4" style="height:31px;padding-bottom:5px"></div>
      <div class="lbox d-flex flex-column flex-fill" style="min-height:0;margin-right:7px">
        <div class="d-flex flex-fill" style="min-height:0">
          <div class="flex-fill overflow-hidden" style="min-width:0"><table class="files"><tbody id="files"></tbody></table></div>
          <div class="sbv d-flex flex-column"><button aria-label="上"><svg width="8" height="8"><use href="#up"/></svg></button><div class="thumb" style="height:17px"></div><button class="mt-auto" aria-label="下"><svg width="8" height="8"><use href="#dn"/></svg></button></div>
        </div>
        <div class="d-flex flex-shrink-0" style="height:17px">
          <div class="d-flex flex-fill border-top border-secondary">
            <button class="nb" aria-label="第一个"><svg width="10" height="10" fill="#999"><path d="M1 0h1v10H1zM8 0v10L3 5z"/></svg></button>
            <button class="nb" aria-label="上一个"><svg width="8" height="8" fill="#999"><use href="#tl"/></svg></button>
            <button class="nb" aria-label="下一个"><svg width="8" height="8" fill="#999"><use href="#tr"/></svg></button>
            <button class="nb" aria-label="最后一个"><svg width="10" height="10" fill="#999"><path d="M8 0h1v10H8zM2 0v10l5-5z"/></svg></button>
            <nav class="d-flex" id="btabs" style="padding-left:2px"></nav>
          </div>
          <div class="d-flex" style="width:40%">
            <i class="border-end border-secondary" style="width:6px"></i><button class="nb raised" aria-label="左"><svg width="8" height="8" fill="#999"><use href="#tl"/></svg></button>
            <div class="hatch flex-fill"></div>
            <button class="nb raised" aria-label="右"><svg width="8" height="8" fill="#999"><use href="#tr"/></svg></button><i style="width:16px"></i>
          </div>
        </div>
      </div>
    </div>
    <div class="d-flex border-start border-secondary ps-1 my-1" style="width:61px">
      <div class="strip d-flex flex-column align-items-center"><span class="rot mt-auto">预览</span></div>
      <div class="d-flex flex-column flex-fill" style="margin:0 4px 0 3px;min-width:0">
        <div class="d-flex align-items-center justify-content-between ps-2 flex-shrink-0" style="height:18px;margin-right:-4px;margin-bottom:9px">
          <button aria-label="播放"><svg width="6" height="10" fill="#3a3ab0"><path d="M0 0v10l5-5z"/></svg></button>
          <button aria-label="快进"><svg width="11" height="10" fill="#3a3ab0"><path d="M0 0v10l5-5zM6 0v10l5-5z"/></svg></button>
        </div>
        <div class="bg-black text-white flex-fill d-flex flex-column overflow-hidden" style="padding-top:18px">
          <svg class="m-auto mb-0" width="10" height="8"><path d="M0 1h3v3H0zM7 1h3v3H7z" fill="#ddd"/><path d="M3 1h4v6H2V5z" fill="#d89a30"/><path d="M1 6h8v1H1z" fill="#999"/></svg>
          <span class="fw-bold text-end mt-auto" style="height:20px">00:0</span>
        </div>
        <div class="d-flex justify-content-center align-items-center" style="height:28px"><i class="raised" style="width:11px;height:21px"></i><i class="bg-secondary" style="width:5px;height:1px"></i></div>
        <div class="d-flex"><button class="nb raised" aria-label="右"><svg width="8" height="8" fill="#999"><use href="#tr"/></svg></button><button class="nb raised" aria-label="左"><svg width="8" height="8" fill="#999"><use href="#tl"/></svg></button></div>
      </div>
    </div>
  </section>

  <footer class="status d-flex align-items-center">
    <span class="me-auto" style="margin-left:2px">就绪</span>
    <span class="pane" style="width:46px"></span>
    <span class="pane d-flex align-items-center" style="width:130px;padding:1px">
      <span class="progress"><span class="progress-bar" style="width:20%"></span><span class="amount">936.96 MB</span></span>
      <span style="background:#f5f1ea;width:36px;white-space:nowrap;padding-left:1px">DVD 5</span>
      <button class="border-start ps-1" aria-label="选择"><svg width="8" height="8"><path d="M0 6h7L3.500 2z"/></svg></button>
    </span>
    <span class="pane" style="width:31px"></span><span class="pane" style="width:31px"></span><span class="pane" style="width:31px"></span>
    <svg width="16" height="16"><path d="M3 15L15 3M7 15l8-8M11 15l4-4" stroke="#999" stroke-width="1.500"/></svg>
  </footer>
</div>

<svg class="ink" width="1125" height="811" fill="#fc3a3a" aria-hidden="true">
  <path d="M153 636l9-16 3 5L395 466 171 630l5 4z"/>
  <path d="M488 387l-18 4 3 3-98 81v1l102-75 3 2z"/>
  <path d="M403 592l18 5-2 3 117 104-122-99-3 3z"/>
  <path d="M241 761l14-11 3 4 143-46-137 52 3 4z"/>
</svg>
<span class="note" style="left:400px;top:344px">5、选择对应曲目编号的图片，拖到这个黑色区域</span>
<span class="note" style="left:547px;top:693px">4、切换图片显示方式（略缩图或者详细，现在是详细状态）</span>
<span class="note" style="left:402px;top:703px">3、点背景图片</span>

<script src="https://cdn.jsdelivr.net/npm/bootstrap@5.3.0/dist/js/bootstrap.bundle.min.js"></script>
<script>
const $=id=>document.getElementById(id), add=(id,h)=>$(id).insertAdjacentHTML('beforeend',h);
const use=(n,w=16,h=16)=>`<svg class="${w==16&&h==16?'i':''}" width="${w}" height="${h}"><use href="#${n}"/></svg>`;
// toolbars: "|" separator, "v" drop arrow, "*" marks a pressed button
const bar=s=>s.split(' ').map(n=>n=='|'?'<i class="sep"></i>':n=='v'?'<button class="dd" aria-label="更多"><svg width="8" height="8"><use href="#tri"/></svg></button>':n=='-'?'<i style="width:4px"></i>':`<button class="tb${n[0]=='*'?' active':''}" aria-label="${n}">${use(n.replace('*',''),['aa','vts','note','ac3'].includes(n)?18:16,n=='vts'?18:16)}</button>`).join('');
add('menus','文件(F),编辑(E),工具(T),视图(V),项目,影片,菜单,幻灯片,连接,全局 VM,lab-对话,工具,窗口(W),帮助(H)'.split(',').map(t=>`<a href="#">${t}</a>`).join(''));
add('bar1',bar('new open save | copy paste | undo redo | link stack bino | burn | sort - wand v | fx dfx camd | zin zout one | pro | help'));
add('bar2',bar('| grpA grpA grpU grpD ch cv | *book'));
add('bar3',bar('nfilm nmenu nred npic nsnd | vts'));
add('bar4',bar('fwin | open del | *ftree - az v | casc | note ac3 rg glas hist | fcut fdev | thumbs'));
$('palette').innerHTML=bar('*cur node brush rotn aa rw re poly pen')+'<hr class="m-0">'+bar('circ');
let h='',v='';for(let n=0;n<=650;n+=50)h+=`<span>${n}</span>`;for(let n=0;n<=400;n+=50)v+=`<span class="${n<100?'wide':''}">${n}</span>`;
$('hr').innerHTML=h+'<i class="hmark"></i>';$('vr').innerHTML=v+'<i class="vmark"></i>';
const G={' ':'<i class="g"></i>','v':'<i class="g gv"></i>','t':'<i class="g gt"></i>','-':'<i class="g gh"><i class="box9"></i></i>','=':'<i class="g gt"><i class="box9"></i></i>','+':'<i class="g gt"><i class="box9 plus"></i></i>'};
const T=[['-','proj','项目',17],[' t','link','连接',16],[' t','fold','&nbsp;VMG 菜单',17],[' +','fold','命令',17],[' =','disc','VTS 1',17],['  =','fold','影片',17]];
for(let n=1;n<=12;n++)T.push(['  vt','mv','音频节目 '+n,14]);
$('tree').innerHTML=T.map(([g,i,t,w],k)=>`<div class="trow d-flex align-items-center">${[...g].map(c=>G[c]).join('')}<span class="tico">${use(i,w,i=='mv'?13:16)}</span><span class="${k==6?'focus1':k>6?'tname':''}">${t}</span></div>`).join('');
const m=(t,i='menu')=>`<a href="#">${use(i,i=='menu'?14:16,i=='menu'?13:16)}<span>${t}</span></a>`;
$('mdi').innerHTML=[6,7,8,9,10,11,12,13].map(n=>m('菜单 '+n)).join('')+m('连接','link')+`<a href="#" class="on">${use('menu',14,13)}<span>音频节目 1</span></a><span class="ms-auto d-flex align-items-center gap-1 pe-2" style="height:22px"><button aria-label="左"><svg width="10" height="10" fill="#666"><path d="M7 0v10L2 5z"/></svg></button><button aria-label="右"><svg width="10" height="10"><path d="M2.500 1v8L7 5z" fill="none" stroke="#777"/></svg></button><button aria-label="关闭" class="ms-1"><svg width="10" height="10"><path d="M1 1l8 8M9 1L1 9" stroke="#666" stroke-width="1.500"/></svg></button></span>`;
const F=[['00.','封面','57.43'],['01.','G.E.M.邓紫棋-画','70.42'],['02.','G.E.M.邓紫棋-来自天堂的魔鬼','82.04'],['03.','Uu-那女孩对我说','71.53'],['04.','阿冗-你的答案','69.95'],['05.','阿悠悠-你若三冬','71.51'],['06.','阿悠悠-一生与你擦肩而过','78.48'],['07.','半阳-一曲相思','68.09'],['08.','蔡健雅-红色高跟鞋','74.29'],['09.','岑宁儿-追光者','68.88'],['10.','陈柯宇-生僻字','69.59']];
$('files').innerHTML=F.map((r,k)=>`<tr class="${k==1?'sel':''}"><td><b>${r[0]}</b>${r[1]}</td><td>JPG</td><td>${r[2]} KB</td></tr>`).join('');
const B=['视频 & 音频','背景图片','控件','插件','剪辑','音乐','图像'];
$('btabs').innerHTML=B.map((t,k)=>`<a href="#" class="btab${k==1?' on':''}"><svg width="16" height="17" fill="none" stroke="#000">${k==0?'<path d="M5 0l7 16"/>':'<path d="M6 0l7 16M10 8L6 16"/>'}</svg>${t.replace('&','&amp;')}</a>`).join('')+'<i class="btab"><svg width="16" height="17" fill="none" stroke="#000"><path d="M13 0L6 16"/></svg></i>';
</script>
</body>
</html>
